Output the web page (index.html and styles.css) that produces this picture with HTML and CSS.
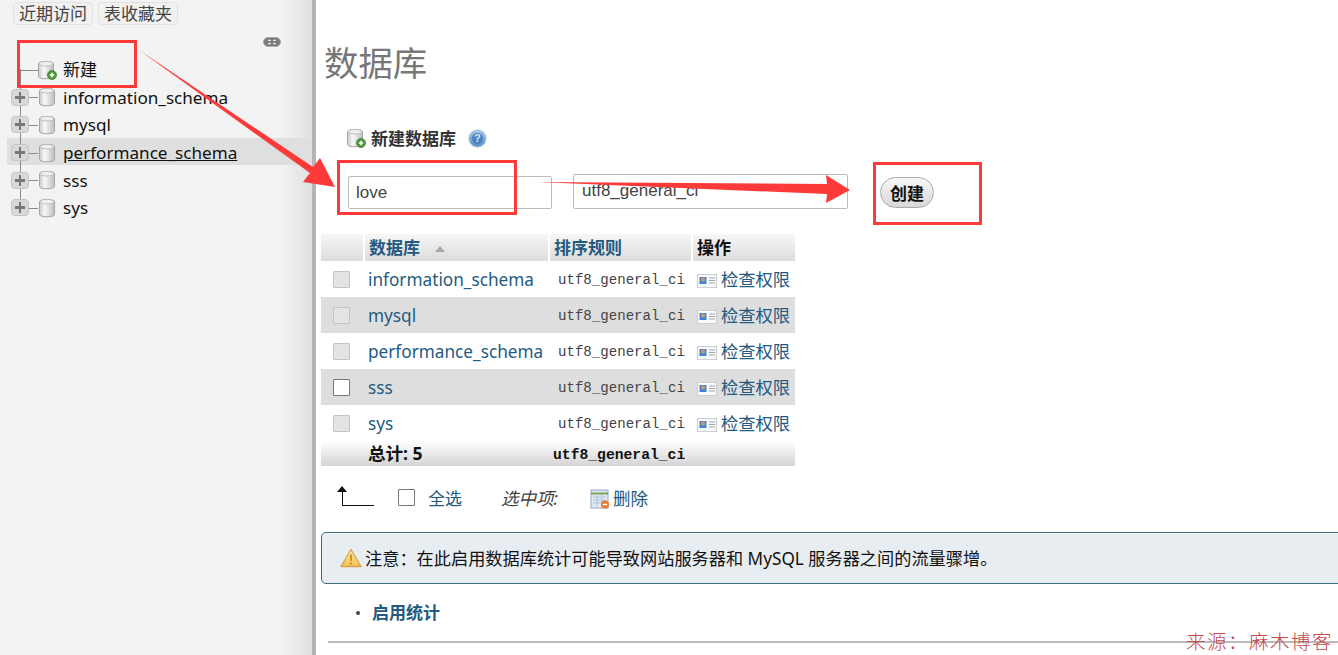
FILE: index.html
```html
<!DOCTYPE html>
<html lang="zh">
<head>
<meta charset="utf-8">
<title>数据库</title>
<link rel="stylesheet" href="styles.css">
</head>
<body>
<svg class="defs" width="0" height="0" aria-hidden="true">
  <defs>
    <linearGradient id="cyl" x1="0" x2="1" y1="0" y2="0">
      <stop offset="0" stop-color="#c9c9c9"/><stop offset=".35" stop-color="#f8f8f8"/><stop offset="1" stop-color="#bdbdbd"/>
    </linearGradient>
    <linearGradient id="blueball" x1="0" x2="0" y1="0" y2="1">
      <stop offset="0" stop-color="#a9c6e6"/><stop offset="1" stop-color="#5a8cc4"/>
    </linearGradient>
    <linearGradient id="warn" x1="0" x2="0" y1="0" y2="1">
      <stop offset="0" stop-color="#fbeeb0"/><stop offset="1" stop-color="#f2c14e"/>
    </linearGradient>
    <symbol id="db" viewBox="0 0 18 20">
      <path d="M1.500 3.500C1.500 1 16.500 1 16.500 3.500V16.500C16.500 19.500 1.500 19.500 1.500 16.500Z" fill="url(#cyl)" stroke="#a5a5a5" stroke-width="1"/>
      <ellipse cx="9" cy="3.700" rx="7" ry="2.300" fill="#efefef" stroke="#b5b5b5" stroke-width=".8"/>
    </symbol>
    <symbol id="dbadd" viewBox="0 0 20 20">
      <path d="M1.500 3.500C1.500 1 16.500 1 16.500 3.500V16.500C16.500 19.500 1.500 19.500 1.500 16.500Z" fill="url(#cyl)" stroke="#a5a5a5" stroke-width="1"/>
      <ellipse cx="9" cy="3.700" rx="7" ry="2.300" fill="#efefef" stroke="#b5b5b5" stroke-width=".8"/>
      <circle cx="15" cy="15" r="4.500" fill="#4f9a3a" stroke="#3c7d2b" stroke-width=".8"/>
      <path d="M12.800 15h4.400M15 12.800v4.400" stroke="#fff" stroke-width="1.500"/>
    </symbol>
    <symbol id="priv" viewBox="0 0 22 18">
      <path d="M1.500 2.500H20.500V15.500H1.500Z" fill="#fbfbfb" stroke="#cfcfcf" stroke-width="1.200"/>
      <rect x="3.500" y="5" width="7" height="7" fill="#3f86d6"/>
      <circle cx="7" cy="7.500" r="2" fill="#d99a55"/>
      <path d="M13 6h6M13 8.500h6M13 11h6" stroke="#9ea7b0" stroke-width="1.200"/>
    </symbol>
  </defs>
</svg>

<div class="page">
  <aside class="sidebar">
    <div class="tabs">
      <span class="tab">近期访问</span>
      <span class="tab">表收藏夹</span>
    </div>
    <div class="linkbar">
      <svg class="linkicon" viewBox="0 0 18 10" aria-hidden="true">
        <rect x=".5" y=".5" width="17" height="9" rx="4.500" fill="#7b7b7b" stroke="#a8a8a8"/>
        <path d="M5 3.300h3M5 6.700h3M10 3.300h3M10 6.700h3" stroke="#e8e8e8" stroke-width="1.300"/>
      </svg>
    </div>
    <ul class="tree">
      <li class="node node-new">
        <span class="spacer"></span>
        <svg class="dbicon"><use href="#dbadd"/></svg>
        <span class="label">新建</span>
      </li>
      <li class="node"><span class="plus"></span><svg class="dbicon"><use href="#db"/></svg><span class="label">information_schema</span></li>
      <li class="node"><span class="plus"></span><svg class="dbicon"><use href="#db"/></svg><span class="label">mysql</span></li>
      <li class="node node-hover"><span class="plus"></span><svg class="dbicon"><use href="#db"/></svg><span class="label">performance_schema</span></li>
      <li class="node"><span class="plus"></span><svg class="dbicon"><use href="#db"/></svg><span class="label">sss</span></li>
      <li class="node node-last"><span class="plus"></span><svg class="dbicon"><use href="#db"/></svg><span class="label">sys</span></li>
    </ul>
  </aside>

  <main class="content">
    <h1 class="title">数据库</h1>

    <div class="newdb-head">
      <svg class="newdb-icon"><use href="#dbadd"/></svg>
      <span class="newdb-label">新建数据库</span>
      <svg class="help" viewBox="0 0 18 18" aria-hidden="true">
        <circle cx="9" cy="9" r="8.300" fill="url(#blueball)" stroke="#bcd2ea"/>
        <circle cx="9" cy="9" r="5.200" fill="#4f82bd"/>
        <text x="9" y="12.300" class="helpq">?</text>
      </svg>
    </div>

    <div class="newdb-form">
      <div class="field field-name">love</div>
      <div class="field field-coll">utf8_general_ci</div>
      <span class="btn">创建</span>
    </div>

    <table class="dbtable">
      <thead>
        <tr>
          <th class="c-check"></th>
          <th class="c-name"><span class="thlink">数据库</span><span class="sort"></span></th>
          <th class="c-coll"><span class="thlink">排序规则</span></th>
          <th class="c-act">操作</th>
        </tr>
      </thead>
      <tbody>
        <tr>
          <td class="c-check"><span class="check check-off"></span></td>
          <td class="c-name"><span class="dblink">information_schema</span></td>
          <td class="c-coll">utf8_general_ci</td>
          <td class="c-act"><span class="act"><svg class="priv"><use href="#priv"/></svg>检查权限</span></td>
        </tr>
        <tr class="alt">
          <td class="c-check"><span class="check check-off"></span></td>
          <td class="c-name"><span class="dblink">mysql</span></td>
          <td class="c-coll">utf8_general_ci</td>
          <td class="c-act"><span class="act"><svg class="priv"><use href="#priv"/></svg>检查权限</span></td>
        </tr>
        <tr>
          <td class="c-check"><span class="check check-off"></span></td>
          <td class="c-name"><span class="dblink">performance_schema</span></td>
          <td class="c-coll">utf8_general_ci</td>
          <td class="c-act"><span class="act"><svg class="priv"><use href="#priv"/></svg>检查权限</span></td>
        </tr>
        <tr class="alt">
          <td class="c-check"><span class="check"></span></td>
          <td class="c-name"><span class="dblink">sss</span></td>
          <td class="c-coll">utf8_general_ci</td>
          <td class="c-act"><span class="act"><svg class="priv"><use href="#priv"/></svg>检查权限</span></td>
        </tr>
        <tr>
          <td class="c-check"><span class="check check-off"></span></td>
          <td class="c-name"><span class="dblink">sys</span></td>
          <td class="c-coll">utf8_general_ci</td>
          <td class="c-act"><span class="act"><svg class="priv"><use href="#priv"/></svg>检查权限</span></td>
        </tr>
      </tbody>
      <tfoot>
        <tr>
          <td class="c-check"></td>
          <td class="c-name total">总计: 5</td>
          <td class="c-coll total-coll">utf8_general_ci</td>
          <td class="c-act"></td>
        </tr>
      </tfoot>
    </table>

    <div class="withselected">
      <svg class="uparrow" viewBox="0 0 38 22" aria-hidden="true">
        <path d="M5 1L10 7H6V20H37V21H5V7H0Z" fill="#111"/>
      </svg>
      <span class="check check-all"></span>
      <span class="selall">全选</span>
      <em class="selected">选中项:</em>
      <svg class="delicon" viewBox="0 0 20 20" aria-hidden="true">
        <rect x="1" y="1" width="17" height="18" fill="#dfe9f3" stroke="#8fa9c4"/>
        <path d="M1 4.500H18" stroke="#7fa35c" stroke-width="2"/>
        <path d="M3 8h13M3 11h13M3 14h13M7 6v11M12 6v11" stroke="#a9bccf" stroke-width=".8"/>
        <circle cx="15" cy="15.500" r="4" fill="#e8792c"/>
        <path d="M12.800 15.500h4.400" stroke="#fff" stroke-width="1.500"/>
      </svg>
      <span class="del">删除</span>
    </div>

    <div class="notice">
      <svg class="warn" viewBox="0 0 22 20" aria-hidden="true">
        <path d="M11 1.500L21 18.500H1Z" fill="url(#warn)" stroke="#d9a24a" stroke-width="1.300" stroke-linejoin="round"/>
        <path d="M11 6.500V13M11 14.500v2" stroke="#c9962c" stroke-width="2"/>
      </svg>
      <span>注意：在此启用数据库统计可能导致网站服务器和 MySQL 服务器之间的流量骤增。</span>
    </div>

    <ul class="links">
      <li>启用统计</li>
    </ul>

    <hr class="rule">
  </main>
</div>

<svg class="annot" viewBox="0 0 1338 655" aria-hidden="true">
  <g class="annot-box">
    <rect x="18.500" y="41.500" width="117" height="45"/>
    <rect x="338.500" y="161.500" width="177" height="52"/>
    <rect x="874.500" y="163.500" width="106" height="60"/>
  </g>
  <polygon class="annot-arrow" points="139,50 313,167 320,158 335,187 303,182 310,173"/>
  <polygon class="annot-arrow" points="538,182 827,184 826,175 850,190 826,203 827,194"/>
</svg>
<div class="watermark">来源：麻木博客</div>
</body>
</html>
```
FILE: styles.css
```css
* { box-sizing: border-box; }
html, body { margin: 0; padding: 0; height: 100%; overflow: hidden; background: #fff; }
body { font-family: "Noto Sans", "Noto Sans CJK SC", sans-serif; color: #111; position: relative; }
.defs { position: absolute; }

.page { display: flex; width: 1338px; height: 655px; overflow: hidden; }

/* Sidebar */
.sidebar {
  flex: 0 0 316px;
  height: 655px;
  padding-left: 7px;
  background: linear-gradient(to right, #f3f3f3 0, #f3f3f3 280px, #dfe0e1 312px, #b4b4b4 312px);
  font-size: 18px;
}
.tabs { display: flex; gap: 5px; padding: 2px 0 0 6px; height: 25px; }
.tab {
  display: flex; align-items: center; justify-content: center;
  width: 80px; height: 23px;
  border: 1px solid #e2e2e2; border-radius: 4px;
  background: #f1f1f1; color: #444; font-size: 17px; line-height: 1;
}
.linkbar { display: flex; justify-content: flex-end; height: 30px; padding: 12px 35px 0 0; }
.linkicon { width: 18px; height: 10px; }
.tree { list-style: none; margin: 0; padding: 0; }
.node { display: flex; align-items: center; height: 27.6px; position: relative; width: 305px; padding: 2px 0 0 4px; }
.node::before { content: ""; position: absolute; left: 13px; top: 0; bottom: 0; width: 1px; background: #8a8a8a; }
.node-new::before { top: 50%; }
.node-last::before { bottom: 50%; }
.node::after { content: ""; position: absolute; left: 13px; top: calc(50% + 1px); width: 18px; height: 1px; background: #8a8a8a; }
.spacer { flex: 0 0 18px; }
.plus {
  flex: 0 0 18px; height: 17px; position: relative; z-index: 1;
  border: 1px solid #c4c4c4; border-radius: 4px; background: #d8d8d8;
}
.plus::before { content: ""; position: absolute; left: 3px; right: 3px; top: 6px; height: 3px; background: #777; }
.plus::after { content: ""; position: absolute; top: 2px; bottom: 2px; left: 7px; width: 2px; background: #777; }
.dbicon { flex: 0 0 20px; width: 20px; height: 20px; margin-left: 8px; position: relative; z-index: 1; }
.label { margin-left: 6px; font-size: 17.1px; line-height: 1; color: #111; }
.node-hover { background: #dfdfdf; }
.node-hover .label { text-decoration: underline; }

/* Main */
.content { flex: 1 1 auto; min-width: 0; overflow: hidden; padding-left: 8px; height: 655px; }
.title { margin: 41px 0 0; height: 44px; font-size: 34.400px; line-height: 44px; font-weight: 400; color: #777; }
.newdb-head { display: flex; align-items: center; height: 22px; margin: 42px 0 0 22px; }
.newdb-icon { width: 20px; height: 20px; }
.newdb-label { margin-left: 5px; font-size: 17px; font-weight: 700; color: #333; line-height: 1; }
.help { width: 19px; height: 19px; margin-left: 12px; }
.helpq { font-size: 10px; font-weight: 700; fill: #dfeaf6; text-anchor: middle; font-family: "Liberation Sans", sans-serif; }

.newdb-form { display: flex; align-items: center; height: 35px; margin: 25px 0 0 24px; }
.field {
  border: 1px solid #bbb; border-radius: 2px; background: #fff; color: #444;
  font-family: "Liberation Sans", sans-serif; font-size: 17px;
  display: flex; align-items: center; padding-left: 7px;
}
.field-name { width: 204px; height: 33px; margin-top: 2px; }
.field-coll { width: 275px; height: 35px; margin-left: 21px; padding-left: 8px; padding-bottom: 2px; }
.btn {
  display: flex; align-items: center; justify-content: center;
  width: 54px; height: 31px; margin: 1px 0 0 32px;
  border: 1px solid #aaa; border-radius: 16px;
  background: linear-gradient(#f8f8f8, #d8d8d8);
  font-size: 17px; font-weight: 700; color: #111;
}

.dbtable { border-collapse: separate; border-spacing: 0; table-layout: fixed; width: 474px; margin: 25px 0 0 -3px; }
.c-check { width: 42px; }
.c-name { width: 185px; }
.c-coll { width: 143px; }
.c-act { width: 104px; }
thead th {
  height: 27px; padding: 0 0 0 4px; text-align: left; font-size: 17px; font-weight: 700; color: #111;
  background: linear-gradient(#f7f7f7, #dcdcdc);
  border-left: 2px solid #fff; line-height: 1;
}
thead th:first-child { border-left: 0; }
.thlink { color: #235a81; }
.sort {
  display: inline-block; margin-left: 15px; vertical-align: middle;
  border-left: 5px solid transparent; border-right: 5px solid transparent; border-bottom: 6px solid #a8a8a8;
}
tbody td { height: 36px; padding: 2px 0 0; font-size: 17.2px; line-height: 1; }
tbody tr.alt td { background: #dedede; }
tbody td.c-check { padding: 0 0 0 12px; vertical-align: middle; }
tbody td.c-name { padding-left: 5px; }
tbody td.c-coll { padding-left: 10px; font-family: "Liberation Mono", monospace; font-size: 14.1px; color: #444; }
tbody td.c-act { padding-left: 5px; white-space: nowrap; }
.dblink { color: #235a81; white-space: nowrap; }
.act { display: flex; align-items: center; font-size: 17.3px; color: #235a81; }
.priv { width: 22px; height: 18px; margin-right: 3px; margin-top: 2px; }
.check { display: inline-block; width: 17px; height: 17px; border: 1px solid #767676; border-radius: 1px; background: #fff; vertical-align: middle; }
.check-off { background: #e4e4e4; border-color: #c4c4c4; }
tfoot td { height: 25px; padding: 0; background: linear-gradient(#ffffff, #d4d4d4); font-weight: 700; font-size: 17.5px; color: #111; line-height: 1; }
tfoot td.total { padding-left: 5px; }
tfoot td.total-coll { padding: 3px 0 0 5px; font-family: "Liberation Mono", monospace; font-size: 14.7px; }

.withselected { display: flex; align-items: center; height: 30px; margin: 16px 0 0 13px; }
.uparrow { width: 38px; height: 22px; margin-bottom: 3px; }
.check-all { margin-left: 23px; }
.selall { margin-left: 13px; font-size: 17px; color: #235a81; }
.selected { margin-left: 39px; font-size: 17.5px; color: #444; }
.delicon { width: 20px; height: 20px; margin-left: 32px; margin-top: 3px; }
.del { margin-left: 3px; font-size: 17.5px; color: #235a81; }

.notice {
  display: flex; align-items: center; width: 1040px; height: 52px;
  margin: 20px 0 0 -3px; padding-left: 18px;
  border: 1px solid #3a6c7e; border-radius: 5px;
  background: #e8edf1; box-shadow: inset 0 1px 0 #f6f8fa;
  font-size: 17.2px; color: #111;
}
.notice span { position: relative; top: -1px; }
.warn { width: 22px; height: 20px; margin-right: 3px; flex: none; }

.links { margin: 16px 0 0; padding: 0 0 0 48px; list-style: none; height: 25px; position: relative; }
.links li { font-size: 17px; font-weight: 700; color: #235a81; line-height: 25px; }
.links li::before { content: ""; position: absolute; left: 32px; top: 11px; width: 4px; height: 4px; border-radius: 50%; background: #444; }
.rule { margin: 16px 0 0 4px; border: 0; height: 2px; background: #bbb; width: 1010px; }

/* Annotations laid over the screenshot */
.annot { position: absolute; left: 0; top: 0; width: 1338px; height: 655px; pointer-events: none; }
.annot-box rect { fill: none; stroke: #fc3a3a; stroke-width: 3; }
.annot-arrow { fill: #fc3a3a; }
.watermark {
  position: absolute; left: 1186px; top: 632px;
  font-family: "Liberation Serif", "Noto Sans CJK SC", serif; font-size: 19.5px; line-height: 22px;
  letter-spacing: 1.500px; color: #c4484c; font-weight: 300; white-space: nowrap;
}
```
